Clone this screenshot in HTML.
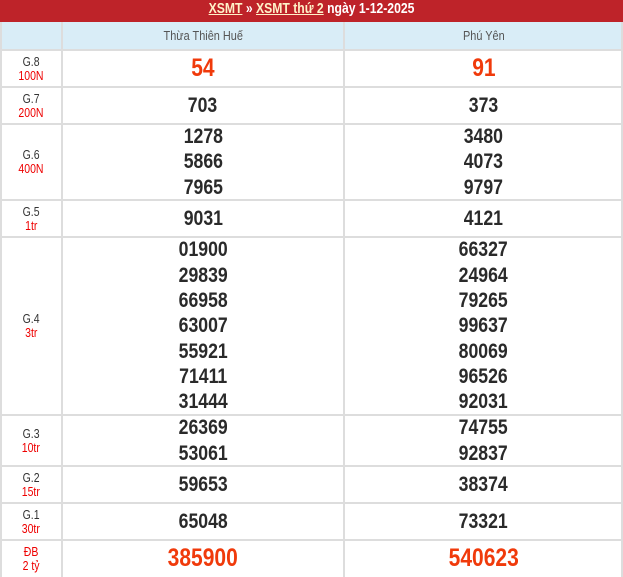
<!DOCTYPE html>
<html><head><meta charset="utf-8"><style>
*{margin:0;padding:0;box-sizing:border-box}
body{width:623px;height:577px;background:#fff;position:relative;overflow:hidden;font-family:"Liberation Sans",sans-serif}
.s{display:inline-block;transform:scaleX(0.84);transform-origin:center}
.title{position:absolute;left:0;top:0;width:623px;height:22px;background:#be2329;color:#fff;font-weight:bold;font-size:14.5px;text-align:center;line-height:18px}
.title u{color:#fff1c8}
.hdr{position:absolute;top:22px;height:28px;background:#d9edf7;color:#555;font-size:13px;text-align:center;line-height:28px}
.h{position:absolute;left:0;width:623px;height:2px;background:#ddd}
.v{position:absolute;top:22px;width:2px;height:555px;background:#ddd}
.row{position:absolute;left:0;width:623px;display:flex;align-items:center}
.lab{width:62px;text-align:center;font-size:12.5px;line-height:14px;color:#333}
.lab span{color:#e00}
.c{position:absolute;text-align:center;font-weight:bold;font-size:21px;line-height:25.3px;color:#2a2a2a}
.c1{left:62px;width:282px}.c2{left:344px;width:279px}
.red{color:#f03a0b;font-size:25px}
</style></head><body>
<div class="title"><span class="s"><u>XSMT</u> » <u>XSMT thứ 2</u> ngày 1-12-2025</span></div>
<div class="hdr" style="left:0;width:62px"></div>
<div class="hdr" style="left:62px;width:282px"><span class="s">Thừa Thiên Huế</span></div>
<div class="hdr" style="left:344px;width:279px"><span class="s">Phú Yên</span></div>
<div class="h" style="top:49px"></div>
<div class="h" style="top:86px"></div>
<div class="h" style="top:123px"></div>
<div class="h" style="top:199px"></div>
<div class="h" style="top:236px"></div>
<div class="h" style="top:414px"></div>
<div class="h" style="top:465px"></div>
<div class="h" style="top:502px"></div>
<div class="h" style="top:539px"></div>
<div class="v" style="left:0"></div>
<div class="v" style="left:61px"></div>
<div class="v" style="left:343px"></div>
<div class="v" style="left:621px"></div>

<div class="row" style="top:50px;height:37px"><div class="lab"><span class="s" style="color:#333">G.8</span><br><span class="s">100N</span></div><div class="c c1 red"><span class="s">54</span></div><div class="c c2 red"><span class="s">91</span></div></div>
<div class="row" style="top:87px;height:37px"><div class="lab"><span class="s" style="color:#333">G.7</span><br><span class="s">200N</span></div><div class="c c1"><span class="s">703</span></div><div class="c c2"><span class="s">373</span></div></div>
<div class="row" style="top:124px;height:76px"><div class="lab"><span class="s" style="color:#333">G.6</span><br><span class="s">400N</span></div><div class="c c1"><span class="s">1278<br>5866<br>7965</span></div><div class="c c2"><span class="s">3480<br>4073<br>9797</span></div></div>
<div class="row" style="top:200px;height:37px"><div class="lab"><span class="s" style="color:#333">G.5</span><br><span class="s">1tr</span></div><div class="c c1"><span class="s">9031</span></div><div class="c c2"><span class="s">4121</span></div></div>
<div class="row" style="top:237px;height:178px"><div class="lab"><span class="s" style="color:#333">G.4</span><br><span class="s">3tr</span></div><div class="c c1"><span class="s">01900<br>29839<br>66958<br>63007<br>55921<br>71411<br>31444</span></div><div class="c c2"><span class="s">66327<br>24964<br>79265<br>99637<br>80069<br>96526<br>92031</span></div></div>
<div class="row" style="top:415px;height:51px"><div class="lab"><span class="s" style="color:#333">G.3</span><br><span class="s">10tr</span></div><div class="c c1"><span class="s">26369<br>53061</span></div><div class="c c2"><span class="s">74755<br>92837</span></div></div>
<div class="row" style="top:466px;height:37px"><div class="lab"><span class="s" style="color:#333">G.2</span><br><span class="s">15tr</span></div><div class="c c1"><span class="s">59653</span></div><div class="c c2"><span class="s">38374</span></div></div>
<div class="row" style="top:503px;height:37px"><div class="lab"><span class="s" style="color:#333">G.1</span><br><span class="s">30tr</span></div><div class="c c1"><span class="s">65048</span></div><div class="c c2"><span class="s">73321</span></div></div>
<div class="row" style="top:540px;height:37px"><div class="lab"><span class="s">ĐB<br>2 tỷ</span></div><div class="c c1 red"><span class="s">385900</span></div><div class="c c2 red"><span class="s">540623</span></div></div>
</body></html>
